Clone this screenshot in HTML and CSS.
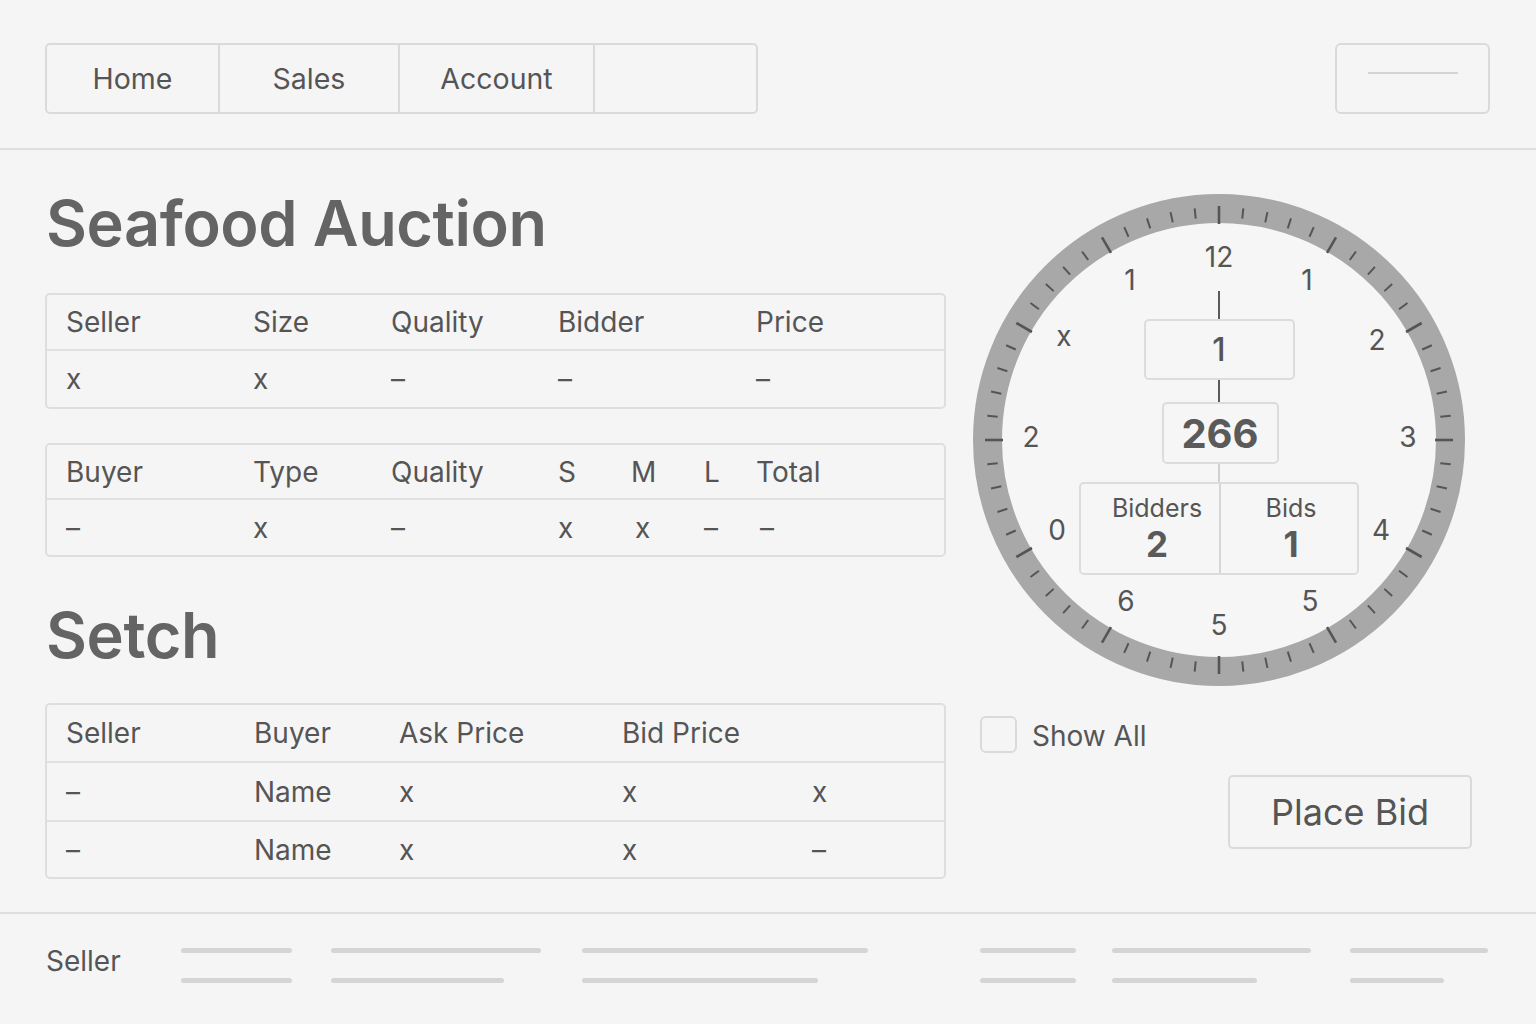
FILE: index.html
```html
<!DOCTYPE html>
<html lang="en">
<head>
<meta charset="utf-8">
<title>Seafood Auction</title>
<link rel="stylesheet" href="styles.css">
</head>
<body>
<header class="topbar">
  <nav class="nav">
    <a class="nav-item nav-home">Home</a>
    <a class="nav-item nav-sales">Sales</a>
    <a class="nav-item nav-account">Account</a>
    <a class="nav-item nav-empty"></a>
  </nav>
  <button class="menu-btn" aria-label="Menu"><span class="menu-line"></span></button>
</header>

<main class="main">
  <section class="left">
    <h1 class="title">Seafood Auction</h1>

    <div class="table t1">
      <div class="row head"><span>Seller</span><span>Size</span><span>Quality</span><span>Bidder</span><span>Price</span></div>
      <div class="row body last"><span>x</span><span>x</span><span>–</span><span>–</span><span>–</span></div>
    </div>

    <div class="table t2">
      <div class="row head"><span>Buyer</span><span>Type</span><span>Quality</span><span>S</span><span>M</span><span>L</span><span>Total</span></div>
      <div class="row body last"><span>–</span><span>x</span><span>–</span><span>x</span><span class="shift">x</span><span>–</span><span class="shift">–</span></div>
    </div>

    <h2 class="title title2">Setch</h2>

    <div class="table t3">
      <div class="row head"><span>Seller</span><span>Buyer</span><span>Ask Price</span><span>Bid Price</span><span></span></div>
      <div class="row body"><span>–</span><span>Name</span><span>x</span><span>x</span><span>x</span></div>
      <div class="row body last"><span>–</span><span>Name</span><span>x</span><span>x</span><span>–</span></div>
    </div>
  </section>

  <aside class="right">
    <div class="dial">
      <svg class="dial-svg" viewBox="0 0 492 492" width="492" height="492">
        <circle cx="246" cy="246" r="218" fill="#f6f6f6"/>
        <circle cx="246" cy="246" r="231.5" fill="none" stroke="#a8a8a8" stroke-width="29"/>
        <g id="ticks" stroke="#555" stroke-linecap="butt"></g>
        <g class="dial-nums" font-family="Inter, sans-serif" font-size="28" fill="#555" text-anchor="middle">
          <text x="246" y="73">12</text>
          <text x="157" y="96">1</text>
          <text x="334" y="96">1</text>
          <text x="91" y="152">x</text>
          <text x="404" y="156">2</text>
          <text x="58" y="253">2</text>
          <text x="435" y="253">3</text>
          <text x="84" y="346">0</text>
          <text x="408" y="346">4</text>
          <text x="153" y="417">6</text>
          <text x="337" y="417">5</text>
          <text x="246" y="441">5</text>
        </g>
      </svg>
      <div class="stack">
        <div class="vline dark h28"></div>
        <div class="box box-lot">1</div>
        <div class="vline dark h22"></div>
        <div class="box box-price">266</div>
        <div class="vline light h18"></div>
        <div class="box box-stats">
          <div class="stat stat-a"><span class="stat-label">Bidders</span><span class="stat-num">2</span></div>
          <div class="stat stat-b"><span class="stat-label">Bids</span><span class="stat-num">1</span></div>
        </div>
      </div>
    </div>

    <label class="show-all"><span class="checkbox"></span><span>Show All</span></label>

    <button class="place-bid">Place Bid</button>
  </aside>
</main>

<footer class="footer">
  <span class="footer-label">Seller</span>
  <div class="bars">
    <div class="bar-group"><i class="bar w111"></i><i class="bar w111"></i></div>
    <div class="bar-group"><i class="bar w210"></i><i class="bar w173"></i></div>
    <div class="bar-group g3"><i class="bar w286"></i><i class="bar w236"></i></div>
    <div class="bar-group wide-gap"><i class="bar w96"></i><i class="bar w96"></i></div>
    <div class="bar-group g5"><i class="bar w199"></i><i class="bar w145"></i></div>
    <div class="bar-group"><i class="bar w138"></i><i class="bar w94"></i></div>
  </div>
</footer>

<script>
(function () {
  var g = document.getElementById('ticks');
  var ns = 'http://www.w3.org/2000/svg';
  for (var i = 0; i < 60; i++) {
    var a = i * 6 * Math.PI / 180;
    var major = i % 5 === 0;
    var r1 = major ? 216 : 222.5;
    var r2 = major ? 234 : 233;
    var l = document.createElementNS(ns, 'line');
    l.setAttribute('x1', 246 + r1 * Math.sin(a));
    l.setAttribute('y1', 246 - r1 * Math.cos(a));
    l.setAttribute('x2', 246 + r2 * Math.sin(a));
    l.setAttribute('y2', 246 - r2 * Math.cos(a));
    l.setAttribute('stroke-width', major ? 2.6 : 2);
    g.appendChild(l);
  }
})();
</script>
</body>
</html>
```

FILE: styles.css
```css
* { box-sizing: border-box; }

html, body {
  margin: 0;
  padding: 0;
  background: #f5f5f5;
  font-family: Inter, "Noto Sans", sans-serif;
  color: #555;
}

body {
  width: 1536px;
  height: 1024px;
  overflow: hidden;
}

/* Header */
.topbar {
  height: 150px;
  padding: 43px 46px 0 45px;
  display: flex;
  justify-content: space-between;
  align-items: flex-start;
  border-bottom: 2px solid #dedede;
}

.nav {
  display: flex;
  height: 71px;
  border: 2px solid #dadada;
  border-radius: 5px;
}

.nav-item {
  display: flex;
  align-items: center;
  justify-content: center;
  font-size: 28.5px;
  color: #555;
  border-right: 2px solid #dadada;
}
.nav-home { width: 173px; }
.nav-sales { width: 180px; }
.nav-account { width: 195px; }
.nav-empty { width: 161px; border-right: none; }

.menu-btn {
  width: 155px;
  height: 71px;
  border: 2px solid #dadada;
  border-radius: 6px;
  background: transparent;
  padding: 27px 0 0 0;
  display: flex;
  justify-content: center;
  align-items: flex-start;
}
.menu-line {
  display: block;
  width: 90px;
  height: 2px;
  background: #d4d4d4;
}

/* Main */
.main {
  height: 762px;
  display: flex;
  padding-left: 45px;
  gap: 27px;
}

.left {
  width: 901px;
  display: flex;
  flex-direction: column;
}

.title {
  margin: 41px 0 0 1px;
  font-size: 63px;
  line-height: 64px;
  font-weight: 600;
  color: #646464;
  letter-spacing: -0.4px;
}

.title2 {
  margin-top: 46px;
}

.table {
  border: 2px solid #dedede;
  border-radius: 5px;
  font-size: 28px;
  color: #555;
}
.t1 { margin-top: 38px; }
.t2 { margin-top: 34px; }
.t3 { margin-top: 36px; }

.row {
  display: grid;
  align-items: center;
  padding-left: 19px;
  border-bottom: 2px solid #e0e0e0;
}
.row.last { border-bottom: none; }
.t1 .row.head { height: 56px; }
.t1 .row.body { height: 56px; }
.t2 .row.head { height: 55px; }
.t2 .row.body { height: 55px; }
.t3 .row.head { height: 58px; }
.t3 .row.body { height: 59px; }
.t3 .row.body.last { height: 55px; }

.t1 .row { grid-template-columns: 187px 138px 167px 198px 1fr; }
.t2 .row { grid-template-columns: 187px 138px 167px 73px 73px 52px 1fr; }
.t3 .row { grid-template-columns: 188px 145px 223px 190px 1fr; }

.shift { padding-left: 4px; }

/* Right column */
.right {
  width: 518px;
  display: flex;
  flex-direction: column;
}

.dial {
  position: relative;
  width: 492px;
  height: 492px;
  margin-top: 44px;
}
.dial-svg { display: block; }

.stack {
  position: absolute;
  top: 97px;
  left: 0;
  right: 0;
  display: flex;
  flex-direction: column;
  align-items: center;
}

.vline { width: 2px; }
.vline.dark { background: #5a5a5a; width: 1.5px; }
.vline.light { background: #d0d0d0; }
.h28 { height: 28px; }
.h22 { height: 22px; }
.h18 { height: 18px; }

.box {
  border: 2px solid #dcdcdc;
  border-radius: 5px;
  display: flex;
  align-items: center;
  justify-content: center;
  color: #555;
}
.box-lot {
  width: 151px;
  height: 61px;
  font-size: 32px;
  font-weight: 500;
}
.box-price {
  width: 117px;
  height: 62px;
  font-size: 40px;
  font-weight: 700;
  color: #5a5a5a;
  margin-left: 2px;
}
.box-stats {
  width: 280px;
  height: 93px;
  align-items: stretch;
}
.stat {
  flex: 0 0 50%;
  display: flex;
  flex-direction: column;
  align-items: center;
  padding-top: 9px;
}
.stat-a { padding-left: 14px; }
.stat-b { padding-left: 4px; }
.stat + .stat { border-left: 2px solid #d6d6d6; }
.stat-label {
  font-size: 25px;
  line-height: 30px;
}
.stat-num {
  font-size: 35px;
  line-height: 42px;
  font-weight: 700;
  color: #5a5a5a;
}

.show-all {
  display: flex;
  align-items: center;
  gap: 15px;
  margin-top: 30px;
  padding-left: 7px;
  font-size: 28px;
  color: #555;
}
.show-all span:last-child { padding-top: 3px; }
.checkbox {
  width: 37px;
  height: 37px;
  border: 2px solid #dadada;
  border-radius: 6px;
}

.place-bid {
  align-self: flex-end;
  margin-right: 19px;
  margin-top: 22px;
  width: 244px;
  height: 74px;
  border: 2px solid #dadada;
  border-radius: 5px;
  background: transparent;
  font-family: Inter, sans-serif;
  font-size: 36px;
  color: #555;
  padding: 0;
}

/* Footer */
.footer {
  height: 112px;
  border-top: 2px solid #dedede;
  display: flex;
  align-items: center;
  padding: 0 0 7px 46px;
}
.footer-label {
  width: 135px;
  font-size: 28px;
  margin-bottom: 10px;
  color: #555;
}
.bars {
  display: flex;
  gap: 39px;
}
.bar-group {
  display: flex;
  flex-direction: column;
  gap: 25px;
}
.bar-group.g3 { margin-left: 2px; }
.bar-group.wide-gap { margin-left: 73px; }
.bar-group.g5 { margin-left: -3px; }
.bar {
  display: block;
  height: 5px;
  border-radius: 3px;
  background: #d5d5d5;
}
.w111 { width: 111px; }
.w210 { width: 210px; }
.w173 { width: 173px; }
.w286 { width: 286px; }
.w236 { width: 236px; }
.w96 { width: 96px; }
.w199 { width: 199px; }
.w145 { width: 145px; }
.w138 { width: 138px; }
.w94 { width: 94px; }
```
